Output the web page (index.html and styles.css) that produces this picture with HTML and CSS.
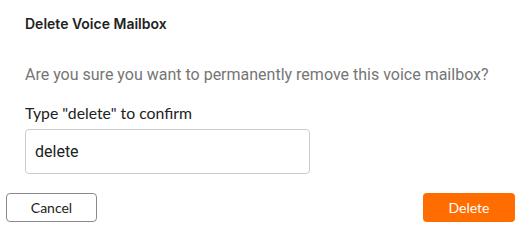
FILE: index.html
```html
<!DOCTYPE html>
<html lang="en">
  <head>
    <meta charset="UTF-8" />
    <meta name="viewport" content="width=device-width, initial-scale=1.0" />
    <title>Delete Voice Mailbox</title>
    <link rel="stylesheet" href="styles.css">
  </head>
  <body>
    <div class="dialog">
      <div class="dialog-body">
        <h2 class="dialog-title">Delete Voice Mailbox</h2>
        <p class="dialog-text">Are you sure you want to permanently remove this voice mailbox?</p>
        <label class="confirm-label" for="confirmInput">Type "delete" to confirm</label>
        <input id="confirmInput" class="confirm-input" type="text" value="delete" />
      </div>
      <div class="dialog-actions">
        <button class="btn btn-cancel">Cancel</button>
        <button class="btn btn-delete">Delete</button>
      </div>
    </div>
  </body>
</html>
```

FILE: styles.css
```css
body {
  margin: 0;
  background-color: #fff;
  font-family: Roboto, Arial, sans-serif;
}
.dialog {
  width: 521px;
  height: 229px;
  box-sizing: border-box;
  padding: 16px 6px 0 6px;
}
.dialog-body {
  padding: 0 19px;
}
.dialog-title {
  margin: 0;
  font-family: Inter, Roboto, sans-serif;
  font-weight: 600;
  font-size: 14px;
  line-height: 16px;
  color: #222;
}
.dialog-text {
  margin: 33px 0 0 0;
  font-size: 16px;
  line-height: 20px;
  color: #757575;
}
.confirm-label {
  display: block;
  margin-top: 19px;
  font-family: Lato, Arial, sans-serif;
  font-size: 15.8px;
  line-height: 18px;
  color: #222;
}
.confirm-input {
  display: block;
  margin-top: 7px;
  width: 285px;
  height: 45px;
  box-sizing: border-box;
  padding: 0 9px;
  border: 1px solid #ccc;
  border-radius: 4px;
  font-family: Roboto, Arial, sans-serif;
  font-size: 16px;
  color: #222;
  outline: none;
}
.dialog-actions {
  display: flex;
  justify-content: space-between;
  margin-top: 19px;
}
.btn {
  width: 92px;
  height: 29px;
  box-sizing: border-box;
  border-radius: 4px;
  font-family: Lato, Arial, sans-serif;
  font-size: 14px;
  cursor: pointer;
}
.btn-cancel {
  width: 91px;
  background-color: #fff;
  border: 1px solid #8a8a8a;
  color: #222;
}
.btn-delete {
  background-color: #ff6d00;
  border: none;
  color: #fff;
}
```
